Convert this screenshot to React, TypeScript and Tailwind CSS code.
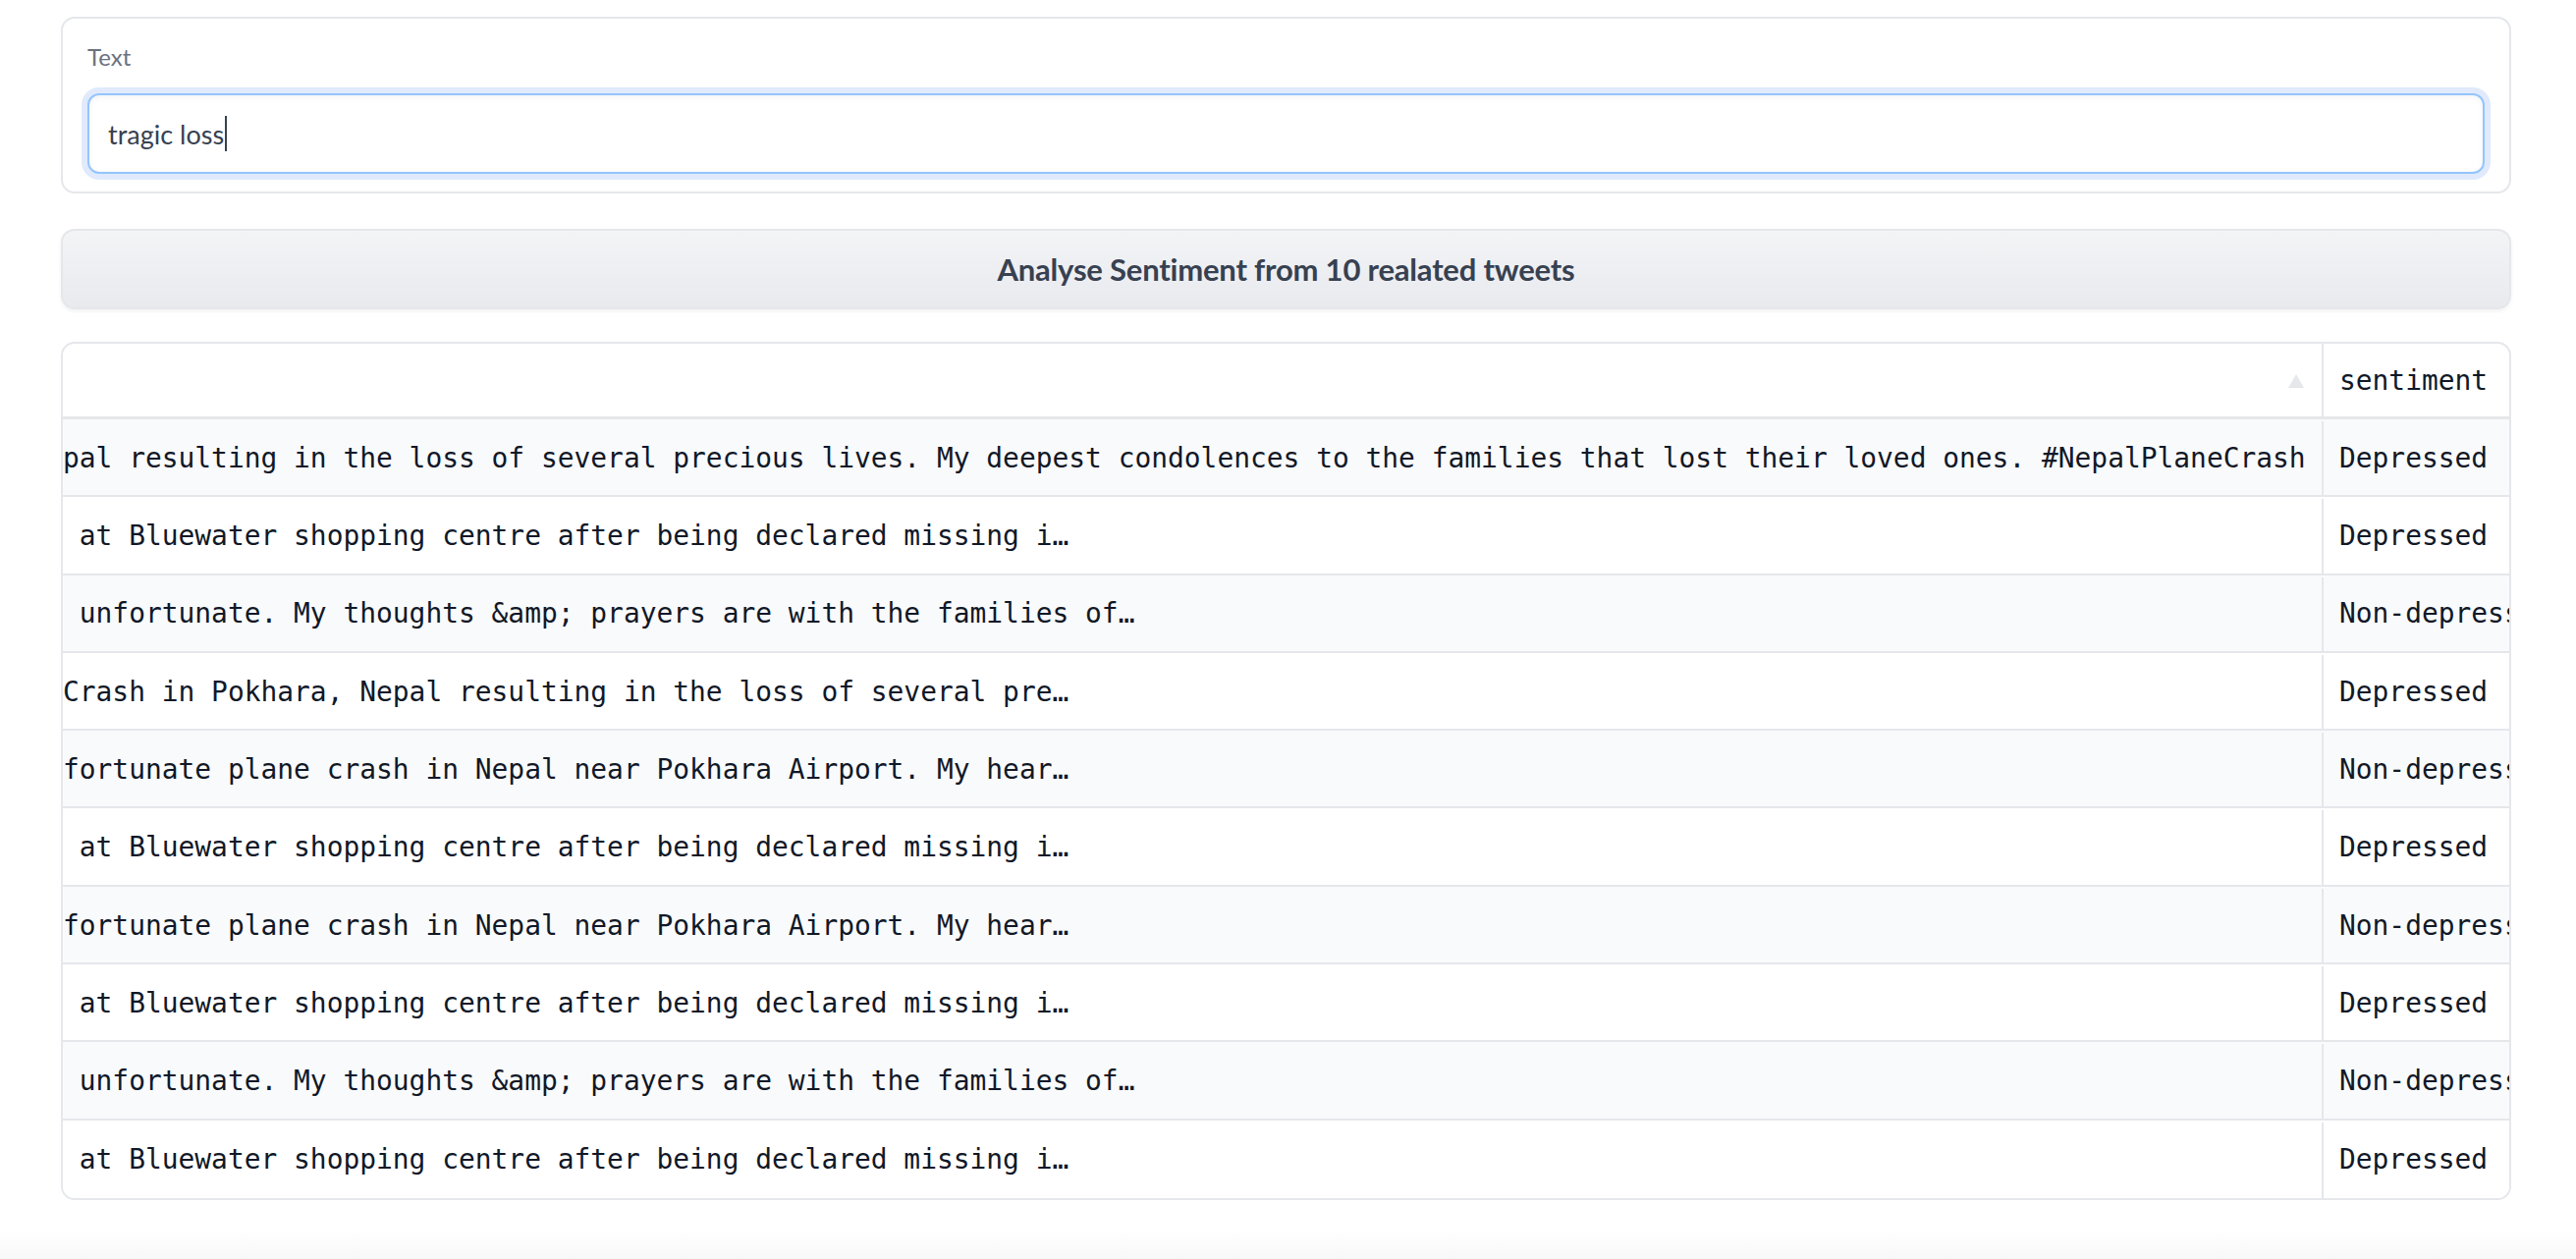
import React from "react";

const rows: { text: string; s: string }[] = [
  { text: "pal resulting in the loss of several precious lives. My deepest condolences to the families that lost their loved ones. #NepalPlaneCrash", s: "Depressed" },
  { text: " at Bluewater shopping centre after being declared missing i…", s: "Depressed" },
  { text: " unfortunate. My thoughts &amp; prayers are with the families of…", s: "Non-depressed" },
  { text: "Crash in Pokhara, Nepal resulting in the loss of several pre…", s: "Depressed" },
  { text: "fortunate plane crash in Nepal near Pokhara Airport. My hear…", s: "Non-depressed" },
  { text: " at Bluewater shopping centre after being declared missing i…", s: "Depressed" },
  { text: "fortunate plane crash in Nepal near Pokhara Airport. My hear…", s: "Non-depressed" },
  { text: " at Bluewater shopping centre after being declared missing i…", s: "Depressed" },
  { text: " unfortunate. My thoughts &amp; prayers are with the families of…", s: "Non-depressed" },
  { text: " at Bluewater shopping centre after being declared missing i…", s: "Depressed" },
];

const sans = "font-['Lato','Noto_Sans',sans-serif]";
const mono = "font-['DejaVu_Sans_Mono','Liberation_Mono',monospace]";

export default function App() {
  return (
    <div className={`w-[2623px] h-[1282px] bg-white overflow-hidden flex flex-col ${sans}`}>
      <div className="ml-[62px] w-[2495px] pt-[17px] flex flex-col">
        {/* Text block */}
        <div className="border-2 border-[#e5e7eb] rounded-[14px] bg-white px-[25px] pt-[21px] pb-[18px] flex flex-col gap-[19px]">
          <div className="text-[24px] leading-[36px] text-[#6b7280]">Text</div>
          <div className="h-[82px] rounded-[12px] border-2 border-[#93c5fd] shadow-[0_0_0_6px_#e0eafc,inset_0_2px_6px_rgba(0,0,0,0.05)] bg-white flex items-center px-[19px]">
            <span className="text-[27px] text-[#374151] leading-none">tragic loss</span>
            <span className="w-[2px] h-[36px] bg-[#374151] ml-[1px]" />
          </div>
        </div>

        {/* Button */}
        <button className="mt-[36px] h-[82px] w-full rounded-[14px] border-2 border-[#e5e7eb] bg-gradient-to-b from-[#f3f4f6] to-[#e9eaee] shadow-[0_2px_4px_rgba(0,0,0,0.06)] flex items-center justify-center">
          <span className="text-[31px] font-bold text-[#374151] tracking-[-0.2px]">Analyse Sentiment from 10 realated tweets</span>
        </button>

        {/* Table */}
        <div className={`mt-[33px] border-2 border-[#e5e7eb] rounded-[14px] overflow-hidden bg-white ${mono} text-[27.9px] text-[#111827]`}>
          <div className="flex h-[77px] border-b-[3px] border-[#e5e7eb]">
            <div className="w-[2300px] shrink-0 flex items-center justify-end pr-[18px] pt-[2px]">
              <svg width="16" height="14" viewBox="0 0 16 14"><polygon points="8,0 16,14 0,14" fill="#e5e7eb" /></svg>
            </div>
            <div className="border-l-2 border-[#e5e7eb] flex-1 flex items-center pl-[16px] pt-[2px] whitespace-pre overflow-hidden">sentiment</div>
          </div>
          {rows.map((r, i) => (
            <div
              key={i}
              className={`flex h-[79.3px] pt-[2px] ${i < rows.length - 1 ? "border-b-2 border-[#e5e7eb]" : ""} ${i % 2 === 0 ? "bg-[#f9fafb]" : "bg-white"}`}
            >
              <div className="w-[2300px] shrink-0 flex items-center whitespace-pre overflow-hidden">{r.text}</div>
              <div className="border-l-2 border-[#e5e7eb] flex-1 flex items-center pl-[16px] whitespace-pre overflow-hidden">{r.s}</div>
            </div>
          ))}
        </div>
      </div>
      <div className="flex-1" />
      <div className="h-[30px] bg-gradient-to-b from-white to-[#f8f8f9]" />
    </div>
  );
}
